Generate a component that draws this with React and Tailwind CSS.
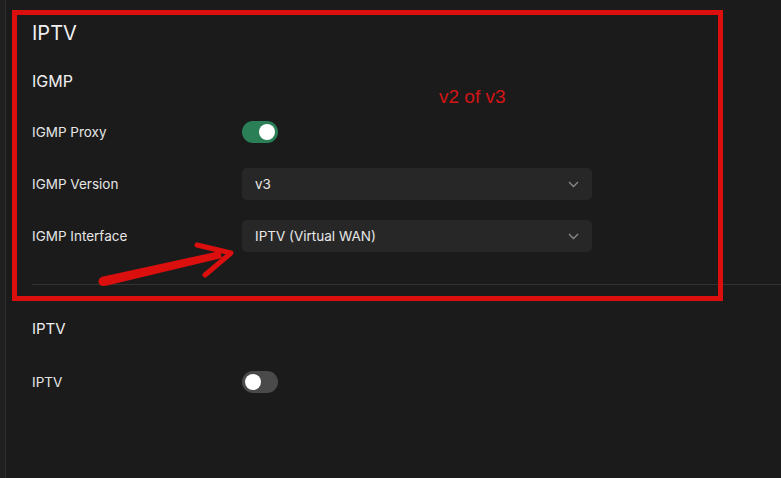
import React from "react";

function Toggle({ on }) {
  return on ? (
    <div className="w-[36px] h-[22px] rounded-full bg-[#2b7f57] flex items-center justify-end pr-[3px]">
      <div className="w-[16px] h-[16px] rounded-full bg-white" />
    </div>
  ) : (
    <div className="w-[36px] h-[22px] rounded-full bg-[#4a4a4a] flex items-center justify-start pl-[3px]">
      <div className="w-[16px] h-[16px] rounded-full bg-white" />
    </div>
  );
}

function Select({ value }) {
  return (
    <div className="w-[350px] h-8 rounded-[5px] bg-[#272727] flex items-center justify-between pl-[13px] pr-[13px]">
      <span className="text-[13.5px] text-[#e8e8e8]">{value}</span>
      <svg width="11" height="7" viewBox="0 0 11 7" fill="none">
        <path d="M1 1l4.5 4.5L10 1" stroke="#8a8a8a" strokeWidth="1.3" />
      </svg>
    </div>
  );
}

function Row({ label, children }) {
  return (
    <div className="flex items-center h-8">
      <div className="w-[210px] text-[13.5px] text-[#e6e6e6]">{label}</div>
      {children}
    </div>
  );
}

export default function App() {
  return (
    <div
      className="relative w-[781px] h-[478px] bg-[#1b1b1b] flex overflow-hidden"
      style={{ fontFamily: "Inter, 'Noto Sans', sans-serif" }}
    >
      <div className="w-[6px] h-full bg-[#1f1f1f] border-r border-[#2d2d2d] shrink-0" />
      <div className="flex-1 pl-[26px] pt-[19px] flex flex-col">
        <div className="text-[20px] leading-[28px] text-[#efefef]">IPTV</div>
        <div className="mt-[22px] text-[16px] leading-[24px] text-[#efefef]">IGMP</div>
        <div className="mt-[23px] flex flex-col gap-5">
          <Row label="IGMP Proxy">
            <Toggle on />
          </Row>
          <Row label="IGMP Version">
            <Select value="v3" />
          </Row>
          <Row label="IGMP Interface">
            <Select value="IPTV (Virtual WAN)" />
          </Row>
        </div>
        <div className="mt-8 h-px bg-[#333333]" />
        <div className="mt-[32px] text-[15px] leading-[24px] text-[#efefef]">IPTV</div>
        <div className="mt-[25px]">
          <Row label="IPTV">
            <Toggle on={false} />
          </Row>
        </div>
      </div>

      {/* annotation overlay */}
      <div className="absolute left-[12px] top-[10px] w-[711px] h-[291px] border-[5px] border-[#dc0f0f] pointer-events-none" />
      <div
        className="absolute left-[439px] top-[84px] text-[19px] leading-[26px] text-[#d41515]"
        style={{ fontFamily: "'Liberation Sans', Arial, sans-serif" }}
      >
        v2 of v3
      </div>
      <svg className="absolute left-0 top-0 pointer-events-none" width="781" height="478">
        <polygon points="101,277 105,286 222,258 220,251" fill="#dc0f0f" />
        <circle cx="103" cy="281.5" r="4.5" fill="#dc0f0f" />
        <polyline
          points="197,245 231,253 205,275"
          fill="none"
          stroke="#dc0f0f"
          strokeWidth="5"
          strokeLinecap="round"
          strokeLinejoin="round"
        />
      </svg>
    </div>
  );
}
